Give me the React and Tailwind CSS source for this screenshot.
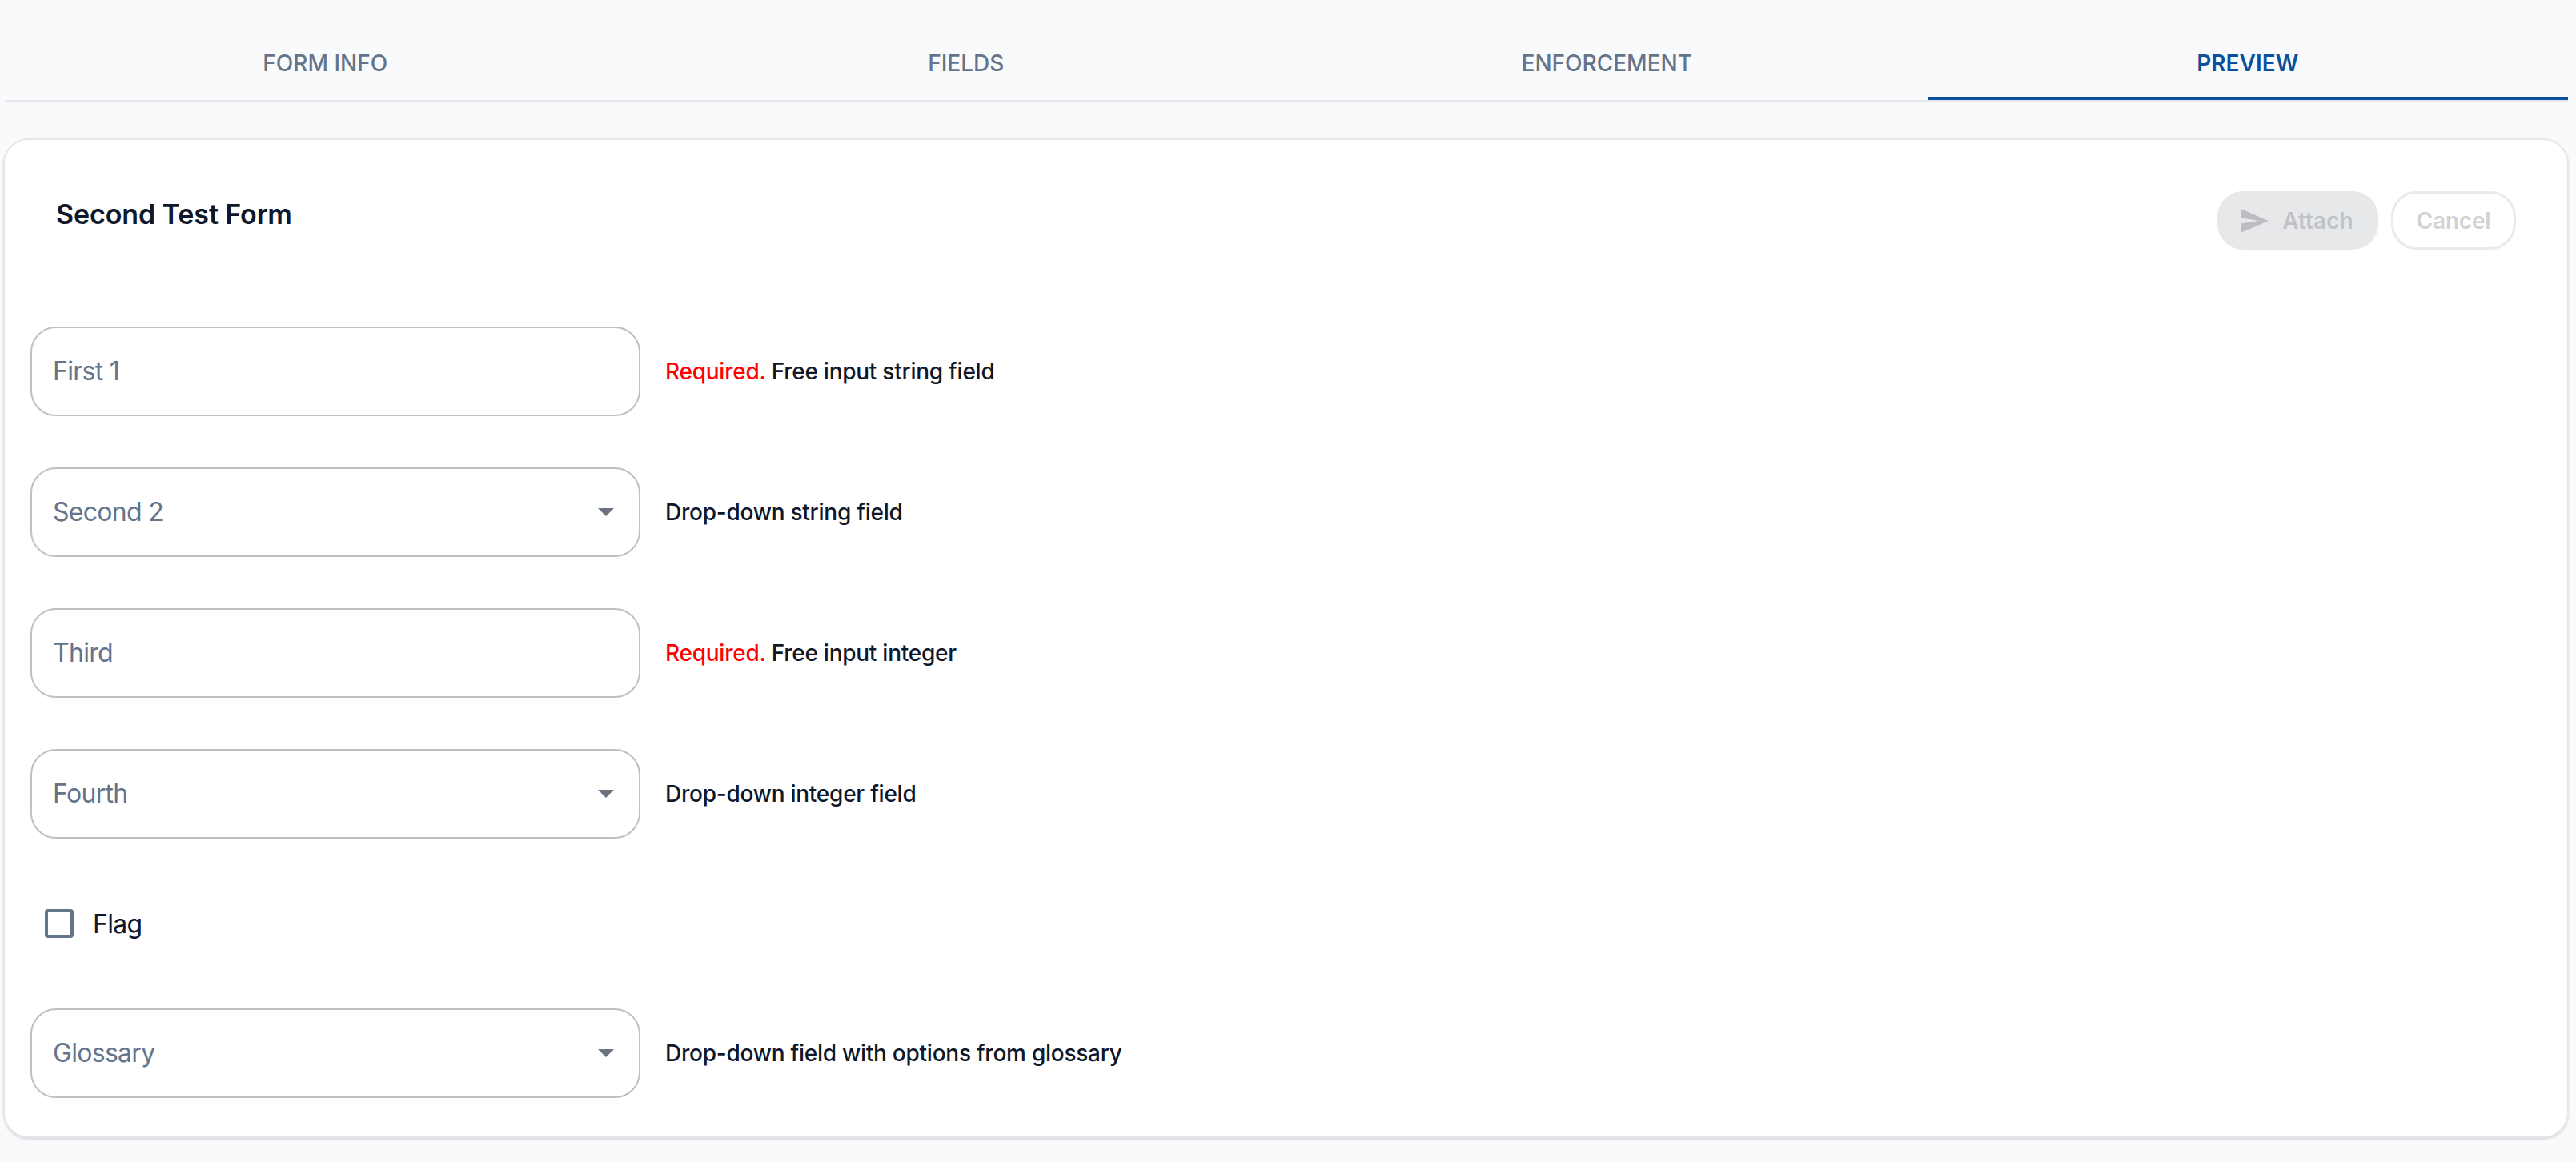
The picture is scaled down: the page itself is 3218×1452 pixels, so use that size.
const FONT = "font-['Inter',sans-serif]";

function Tab({ label, active }) {
  return (
    <div
      className={`flex-1 pt-[59px] pb-[22px] border-b-4 text-center text-[28px] leading-[40px] font-medium ${
        active ? "border-[#0b509f] text-[#0b509f] font-semibold" : "border-transparent text-[#64748b]"
      }`}
    >
      {label}
    </div>
  );
}

function FieldBox({ placeholder, select }) {
  return (
    <div className="w-[762px] h-[112px] shrink-0 border-2 border-[#c0c0c0] rounded-[32px] bg-white pl-[26px] pr-[31px] flex items-center justify-between">
      <span className="text-[32px] leading-[48px] tracking-[-0.7px] text-[#64748b]">{placeholder}</span>
      {select && (
        <svg width="20" height="10" viewBox="0 0 20 10" className="shrink-0">
          <polygon points="0,0 20,0 10,10" fill="#6b7280" />
        </svg>
      )}
    </div>
  );
}

function Row({ placeholder, select, required, note }) {
  return (
    <div className="flex items-center gap-[31px]">
      <FieldBox placeholder={placeholder} select={select} />
      <p className="text-[28px] leading-[40px] font-[450] tracking-[-0.25px] text-[#0f172a]">
        {required && <span className="text-[#ff0000]">Required. </span>}
        {note}
      </p>
    </div>
  );
}

export default function App() {
  return (
    <div className={`min-h-screen bg-[#f9fafb] pl-[4px] pr-[9px] pb-[31px] ${FONT}`}>
      <div className="flex ml-[2px] mr-[1px] border-b-2 border-[#e5e7eb]">
        <Tab label="FORM INFO" />
        <Tab label="FIELDS" />
        <Tab label="ENFORCEMENT" />
        <Tab label="PREVIEW" active />
      </div>

      <div className="mt-[46px] bg-white border-2 border-[#e5e7eb] rounded-[32px] shadow-[0_2px_3px_rgba(0,0,0,0.12)] pt-[64px] px-[32px] pb-[48px]">
        <div className="flex items-start justify-between pl-[32px] pr-[32px] mb-[96px]">
          <h2 className="text-[34px] leading-[58px] font-semibold tracking-[-0.1px] text-[#0f172a]">Second Test Form</h2>
          <div className="flex gap-[16px]">
            <button className="h-[73px] w-[201px] rounded-[32px] bg-[#e7e8ea] flex items-center justify-center pr-[2px] gap-[17px] text-[28px] font-semibold text-[#bfc2c8]">
              <svg width="35" height="30" viewBox="0 0 35 30">
                <polygon points="0,0 35,15 0,30 0,18.5 22,15 0,11" fill="#bbbdc3" />
              </svg>
              Attach
            </button>
            <button className="h-[73px] w-[156px] rounded-[32px] border-[3px] border-[#e9eaec] bg-white text-[28px] font-semibold tracking-[-0.2px] text-[#d0d2d6]">
              Cancel
            </button>
          </div>
        </div>

        <div className="flex flex-col gap-[64px]">
          <Row placeholder="First 1" required note="Free input string field" />
          <Row placeholder="Second 2" select note="Drop-down string field" />
          <Row placeholder="Third" required note="Free input integer" />
          <Row placeholder="Fourth" select note="Drop-down integer field" />
          <div className="h-[84px] flex items-center pl-[18px] gap-[24px]">
            <div className="w-[36px] h-[36px] border-[4px] border-[#64748b] rounded-[4px] bg-white" />
            <span className="text-[32px] leading-[48px] tracking-[-0.7px] translate-y-[1px] text-[#0f172a]">Flag</span>
          </div>
          <Row placeholder="Glossary" select note="Drop-down field with options from glossary" />
        </div>
      </div>
    </div>
  );
}
